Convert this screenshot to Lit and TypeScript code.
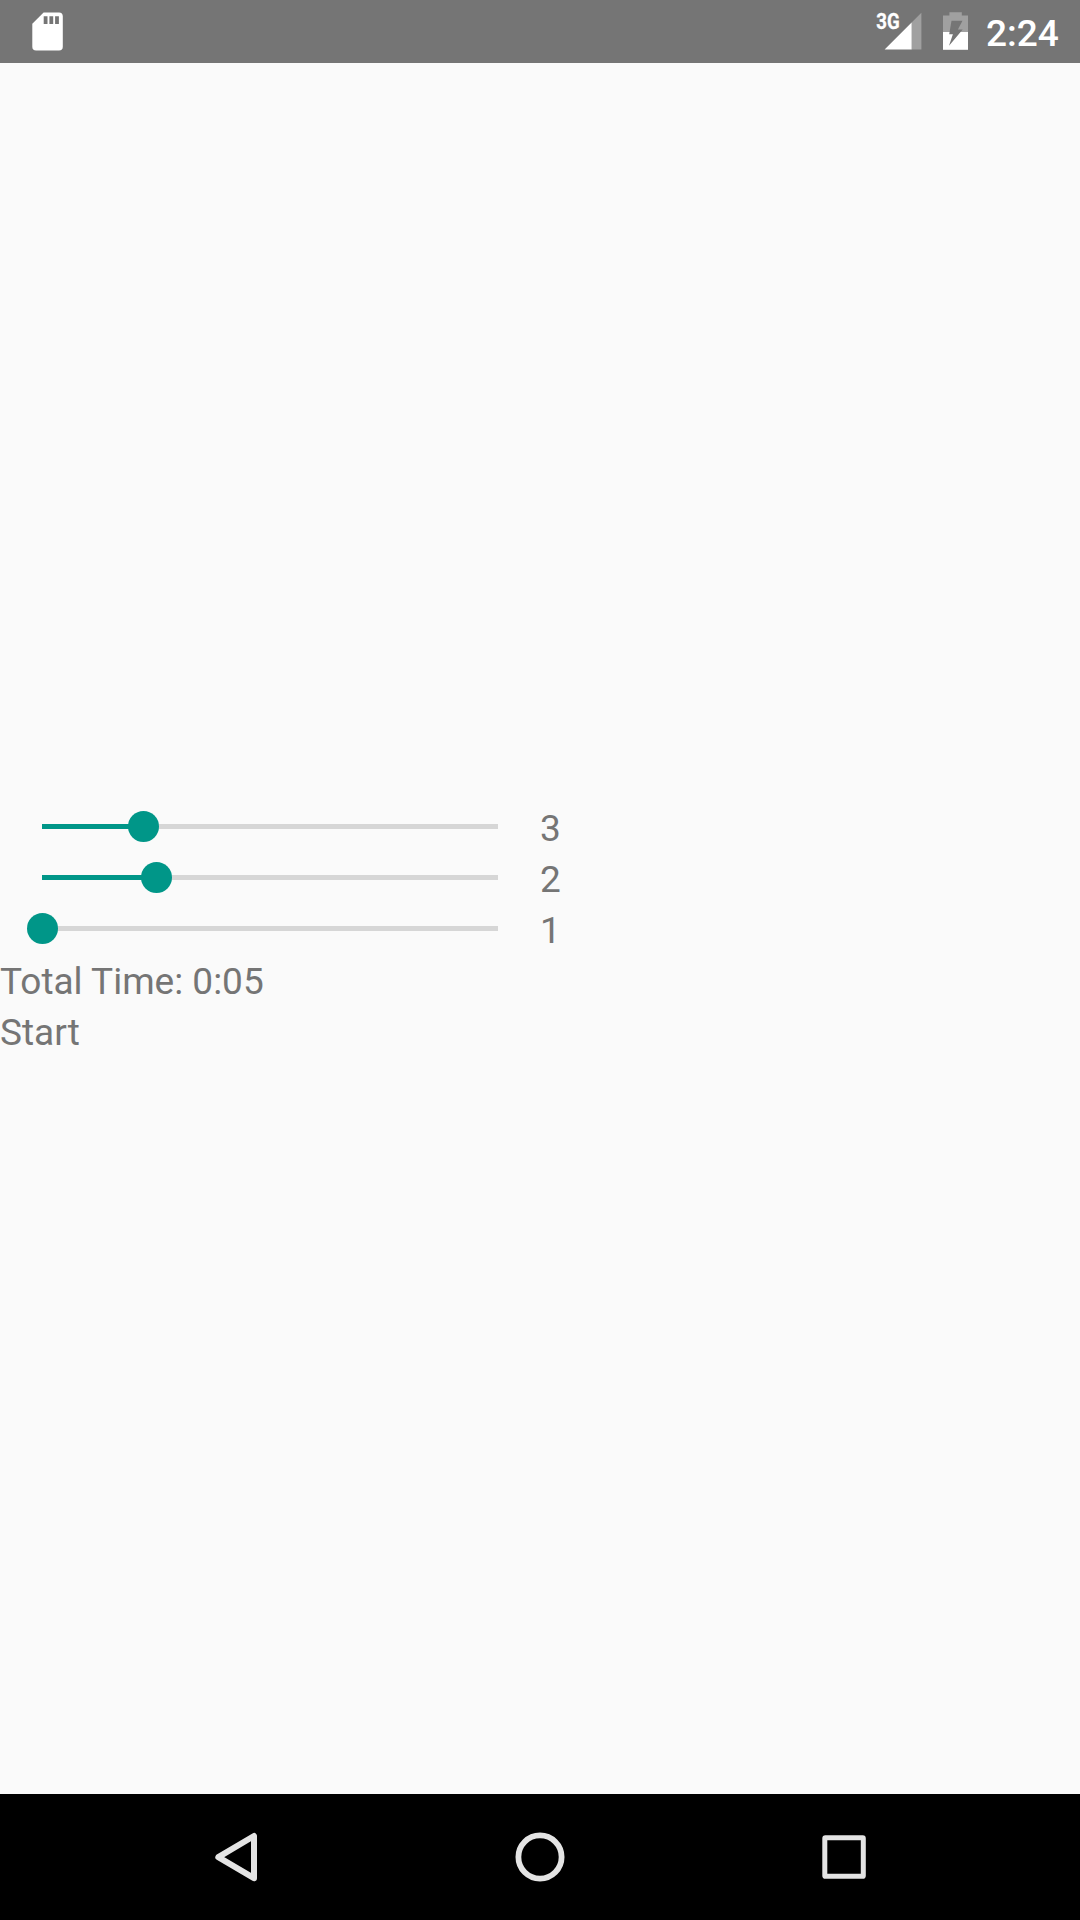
import { LitElement, html, css } from "lit";
import { customElement, property } from "lit/decorators.js";

@customElement("status-bar")
class StatusBar extends LitElement {
  static styles = css`
    :host { display: flex; align-items: stretch; justify-content: space-between; height: 63px; background: #757575; color: #fff; }
    .icon { display: block; height: 63px; }
    .right { display: flex; padding-right: 20px; }
    .network { font: 700 21.5px Roboto, sans-serif; fill: #fff; stroke: #fff; stroke-width: 0.3; }
    .clock { width: 74px; font: 500 37px/63px Roboto, sans-serif; padding-top: 2px; height: 61px; }
  `;
  render() {
    return html`
      <svg class="icon" width="84" height="63" viewBox="0 0 84 63">
        <path fill="#fff" fill-rule="evenodd" d="M43.6 12.4H59a3.8 3.8 0 0 1 3.8 3.8v30.6a3.8 3.8 0 0 1-3.8 3.8H36.1a3.8 3.8 0 0 1-3.8-3.8V23.7zM43.7 16.3v7.8h3.8v-7.8zm5.7 0v7.8h3.8v-7.8zm5.7 0v7.8h3.8v-7.8z" />
      </svg>
      <div class="right">
        <svg class="icon" width="116" height="63" viewBox="870 0 116 63">
          <path fill="#a0a0a0" d="M921.4 12.8v36.8h-10V22.8z" />
          <path fill="#fff" d="M911.6 22.6v27h-27z" />
          <text class="network" x="876.3" y="29.2" textLength="23.4" lengthAdjust="spacingAndGlyphs">3G</text>
          <path fill="#a0a0a0" d="M943 32V15.5h6.4v-3.2h12.4v3.2h6.2V32z" />
          <path fill="#fff" d="M943 32h25v17.8h-25z" />
          <path fill="#757575" d="M951.5 20.8h11l-4.6 8.8h4.8L949 45.7l3.9-11.5h-3.7z" />
        </svg>
        <div class="clock">2:24</div>
      </div>
    `;
  }
}

@customElement("time-slider")
class TimeSlider extends LitElement {
  @property({ type: Number }) value = 0;
  @property({ type: Number }) fraction = 0;
  static styles = css`
    :host { display: grid; grid-template-columns: 540px 1fr; height: 51px; }
    .slider { display: flex; align-items: center; padding: 0 42px; }
    .filled { height: 5px; background: #009688; }
    .rest { flex: 1; height: 5px; background: #d6d6d6; }
    .thumb { width: 31px; height: 31px; margin: 0 -15.5px; border-radius: 50%; background: #009688; z-index: 1; }
    .value { height: 47px; padding-top: 4px; line-height: 48px; }
  `;
  render() {
    return html`
      <div class="slider">
        <div class="filled" style="width:${this.fraction * 100}%"></div>
        <div class="thumb"></div>
        <div class="rest"></div>
      </div>
      <div class="value">${this.value}</div>
    `;
  }
}

@customElement("navigation-bar")
class NavigationBar extends LitElement {
  static styles = css`
    :host { display: flex; align-items: center; justify-content: center; gap: 178px; height: 126px; background: #000; }
    .icon { display: block; width: 126px; height: 126px; fill: none; stroke: #e4e4e4; stroke-linejoin: round; }
  `;
  render() {
    return html`
      <svg class="icon" viewBox="173 0 126 126"><path stroke-width="6" d="M218.3 63.2 254 42v42.2z" /></svg>
      <svg class="icon" viewBox="477 0 126 126"><circle cx="540" cy="63" r="21.6" stroke-width="5.8" /></svg>
      <svg class="icon" viewBox="781 0 126 126"><rect x="824.8" y="43.8" width="38.5" height="38.5" rx="0.6" stroke-width="5" /></svg>
    `;
  }
}

@customElement("app-root")
class AppRoot extends LitElement {
  static styles = css`
    :host { display: flex; flex-direction: column; height: 1920px; background: #fafafa; }
    .content { flex: 1; display: flex; flex-direction: column; justify-content: center; font: 400 37px Roboto, sans-serif; color: #757575; }
    .line { height: 47px; padding-top: 4px; line-height: 48px; }
  `;
  render() {
    const sliders = [
      { value: 3, fraction: 2 / 9 },
      { value: 2, fraction: 1 / 4 },
      { value: 1, fraction: 0 },
    ];
    return html`
      <status-bar></status-bar>
      <div class="content">
        ${sliders.map((s) => html`<time-slider .value=${s.value} .fraction=${s.fraction}></time-slider>`)}
        <div class="line">Total Time: 0:05</div>
        <div class="line">Start</div>
      </div>
      <navigation-bar></navigation-bar>
    `;
  }
}
